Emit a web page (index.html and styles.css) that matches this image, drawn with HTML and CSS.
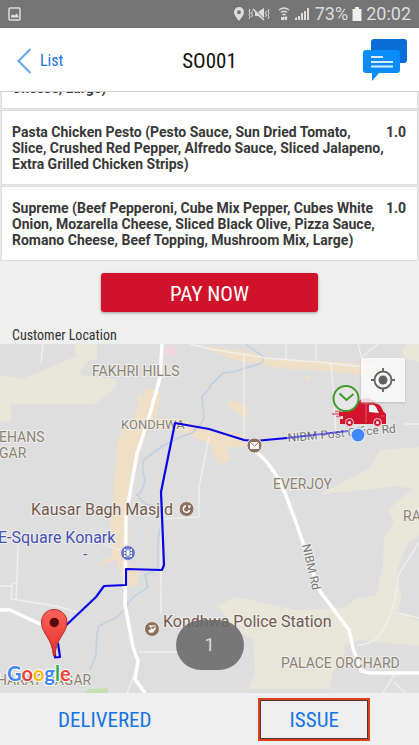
FILE: index.html
```
<!DOCTYPE html>
<html lang="en">
<head>
<meta charset="utf-8">
<meta name="viewport" content="width=device-width, initial-scale=1">
<title>SO001</title>
<link rel="stylesheet" href="styles.css">
</head>
<body>
<div class="status">
  <svg class="status-picture" width="14" height="14" viewBox="0 0 14 14" aria-hidden="true"><rect x="1" y="1" width="11" height="12" rx="1" fill="none" stroke="#ddd" stroke-width="1.5"/><path d="M3 10.500V8.500L5 7.500 6.500 8.500 8.500 6.500 10.500 9v1.500z" fill="#ddd"/></svg>
  <div class="status-right">
    <svg width="78" height="16" viewBox="0 0 78 16" fill="#ddd" aria-hidden="true">
      <path fill-rule="evenodd" d="M6 1a5 5 0 0 0-5 5c0 3.500 5 9 5 9s5-5.500 5-9a5 5 0 0 0-5-5zm0 3.200a2 2 0 1 1 0 4 2 2 0 0 1 0-4z"/>
      <path d="M22 6h3l6-4v12l-6-4h-3z"/><path d="M21 3l11 11" stroke="#757575" stroke-width="1.500"/><path d="M20 3l11 11" stroke="#ddd" stroke-width="1.300"/>
      <path d="M17 3l-1 2 1 2-1 2 1 2-1 2M19.500 5l-1 2 1 2-1 2M36 3l-1 2 1 2-1 2 1 2-1 2M33.500 5l-1 2 1 2-1 2" fill="none" stroke="#ddd"/>
      <path d="M46 4q5-4 10 0M48 6.500q3-2.500 6 0M49.500 9q1.500-1.500 3 0" fill="none" stroke="#ddd" stroke-width="1.400"/><path d="M48 11h2v-1l2 2.500-2 2.500v-1h-2zM53 10l2 2h-1v2h-2v-2h-1z"/>
      <path d="M62 14v-2l2-1v3zM65 14V10h2v4zM68 14V7h2v7zM71 14V5h2v9zM74 14V2h2v12z"/>
    </svg>
    <span>73%</span>
    <svg width="10" height="14" viewBox="0 0 10 14" aria-hidden="true"><path d="M3 0h4v2h2.500v12H.5V2H3z" fill="#eee"/></svg>
    <span class="clock">20:02</span>
  </div>
</div>
<header class="nav">
  <a class="back" href="#list"><svg width="16" height="28" viewBox="0 0 16 28" aria-hidden="true"><path d="M14.500 2L2.500 14l12 12" fill="none" stroke="#62a4f5" stroke-width="2"/></svg>List</a>
  <h1>SO001</h1>
  <button class="chat" aria-label="Messages"><svg width="46" height="44" viewBox="0 0 46 44" aria-hidden="true"><rect x="9" y="1" width="36" height="24" rx="3" fill="#0a6cd6"/><path d="M4 12h31a3 3 0 0 1 3 3v17a3 3 0 0 1-3 3H17l-7 8v-8H4a3 3 0 0 1-3-3V15a3 3 0 0 1 3-3z" fill="#0a8dfb"/><path d="M9 19h12M9 24h22M9 28.500h22" stroke="#d9efff" stroke-width="2"/></svg></button>
</header>
<section class="orders" id="list">
  <ul>
    <li><span>Cheese, Large)</span></li>
    <li><span>Pasta Chicken Pesto (Pesto Sauce, Sun Dried Tomato, Slice, Crushed Red Pepper, Alfredo Sauce, Sliced Jalapeno, Extra Grilled Chicken Strips)</span><span>1.0</span></li>
    <li><span>Supreme (Beef Pepperoni, Cube Mix Pepper, Cubes White Onion, Mozarella Cheese, Sliced Black Olive, Pizza Sauce, Romano Cheese, Beef Topping, Mushroom Mix, Large)</span><span>1.0</span></li>
  </ul>
</section>
<button class="pay">PAY NOW</button>
<h2>Customer Location</h2>
<main class="map">
  <svg class="map-art" viewBox="0 344 419 349" preserveAspectRatio="xMidYMid slice" role="img" aria-label="Delivery route">
    <rect y="344" width="419" height="349" fill="#dedede"/>
    <g fill="#e8e6d9">
      <path d="M0 375l22 4 55-23-3-12h23v14l-10 4-9 13 38 4v9l-22 16H11v17H0z"/>
      <path d="M407 344h12v18l-14-4-3-8z"/>
      <path d="M320 494l50-26 10-18 39-3v43l-22-4-71 8z"/>
      <path d="M419 484v53l-14 12-8 22 1 15 21 32v28l-60-6-14 6-2 17-10 8-3 18H249l6-18-2-32-14-6-22-28 20-8 58 13 49-2 12-9 20-4 7-30 1-28 10-14-5-13 8-8z"/>
    </g>
    <path d="M419 535l-11 8-1 8 7 4-9 20-7 38 21 8z" fill="#dedede"/>
    <g fill="#f0dfc7">
      <path d="M209 346l30 5 36 7 60 4 38 2-2 12-57-6-29-1-46-8-30-11zM142 398l5-10 14 5-5 25 25 1 15 6 47 10 3 12h-20l5 12-11 8-10-23-28-12-34-4-8 24-8 28-4 32 1 26-4 24 14 8-2 16-12 0-8-26-22 6 17-10-2-30 8-86 8-15 10-12 3-23zM225 402l11-1 10 5 4 12-13-4zM304 375l8 3-5 3z"/>
    </g>
    <path d="M165 346h11v10l-12-2z" fill="#eed7df"/><path d="M84 693l5-4 19-1v5z" fill="#c6dfb0"/>
    <path d="M211 386l-9 11 2 21q-3 8-12 15-28 9-48 27-3 8 1 20-3 14-8 15l8 9 14 3 3 12-4 21v29l-13 6 3 12-16 11-13 18-20 10q-3 8-3 30l-6 14M209 387l14-14 10-1 29-9 2-6-13-9-5-4" fill="none" stroke="#bed0e1" stroke-width="1.500"/>
    <g fill="none" stroke="#efefed" stroke-width="1.300">
      <path d="M43 344l-2 19M190 344l20 5 56 9 50 4 60 6M286 344v17M316 344v18M358 344l5 18M378 344l-17 14M331 362l5 70M244 353v84M209 437l-10 50v30l-38 2v95M0 586h11M18 544l-1 38-5 2-1 15 45 7 21 6M17 582l-1 17M100 543l20 7M404 424h15M139 652h40M357 645q17 0 26-15 12-20 16-56l20-32M398 613l21 5M394 675l-11 18M394 682l11 11M140 660l-13 33"/>
    </g>
    <g fill="none" stroke="#fff">
      <path d="M162 344l-2 34-11 39-12 37-6 33-5 30-1 88 8 42 5 14-3 18 10 14M0 610h10l30 14 22 8M253 450q18 11 32 43l13 35 21 62 30 40 4 18 8 23 10 2h48" stroke-width="3.500"/>
    </g>
    <g class="labels">
      <text class="area" x="92" y="376">FAKHRI HILLS</text><text class="area small" x="121" y="429">KONDHWA</text>
      <text class="area" x="-1" y="442">EHANS</text><text class="area" x="-1" y="458">GAR</text>
      <text class="area" x="273" y="489">EVERJOY</text><text class="area" x="403" y="521">RA</text>
      <text class="area" x="281" y="668">PALACE ORCHARD</text><text class="area" x="-3" y="685">HARAT NAGAR</text>
      <text class="place" x="31" y="515">Kausar Bagh Masjid</text><text class="place" x="163" y="627">Kondhwa Police Station</text>
      <text class="shop" x="-2" y="543">E-Square Konark</text><text class="shop" x="83" y="560">-</text>
      <text class="road" transform="translate(288 442) rotate(-5)">NIBM Post Office Rd</text>
      <text class="road" transform="translate(302 545) rotate(77)">NIBM Rd</text>
    </g>
    <g fill="none" stroke="#0803e8" stroke-width="2.200" stroke-linejoin="round">
      <path d="M287 438l-32 3-11-1-35-11-34-6-14 69 3 73-2 5-36-1v16l-22 1-8 11-37 35M58 643l2 14-5 .5v-4"/>
      <path d="M287 438l61-7" opacity=".5"/>
    </g>
    <g stroke="#f0e8e2" stroke-width="1"><circle cx="186.500" cy="509" r="7.500" fill="#8b7060"/><circle cx="254.500" cy="445.500" r="7.500" fill="#8b7060"/><circle cx="152" cy="629" r="7.500" fill="#8b7060"/><circle cx="128" cy="553" r="7.500" fill="#6875cf"/></g>
    <path d="M186 505a4 4 0 1 0 4.500 5h-2a2.300 2.300 0 1 1-2.500-3zM188 505l3 1-2 3z" fill="#fff"/>
    <path d="M250 442h9v7h-9z" fill="#fff"/><path d="M250 442l4.500 4 4.500-4" fill="none" stroke="#8b7060"/>
    <path d="M148 625h8v4l-3 4h-4l-1-3 3-1zM151 627l2 2 2-3" fill="#fff" stroke="#8b7060" stroke-width=".7"/>
    <path d="M124 549h8v8h-8z" fill="#fff"/><path d="M126 549v8M130 549v8M124 551.500h2M124 554.500h2M130 551.500h2M130 554.500h2M128 549v2M128 555v2" stroke="#6875cf"/>
    <defs><linearGradient id="pin" x2="0" y2="1"><stop stop-color="#ff6259"/><stop offset="1" stop-color="#df3029"/></linearGradient></defs>
    <path d="M54 609.500c-7 0-12.500 5.500-12.500 12.500 0 12 10.500 15 12 34h1.500c1-19 12-22 12-34 0-7-6-12.500-13-12.500z" fill="url(#pin)" stroke="#b52c28"/><circle cx="54.300" cy="622.500" r="4.700" fill="#590a0a"/>
    <path d="M332 414h9M335 411.500h6M336 416.500h5" stroke="#e06b7b" stroke-width="1.300"/>
    <path d="M339 412h3l15-7q2-7 9-7 6 0 9 5 6 1 8 8l3 3v10h-4a5 5 0 0 0-9 0h-19a5 5 0 0 0-9 0h-5v-5h3v-3h-4z" fill="#d3122d"/>
    <path d="M369 405q5-1 7 2l3 6-10-1z" fill="#fff"/><path d="M366 398v25M381 416h4" stroke="#e76a7a" stroke-width=".8"/>
    <circle cx="349.500" cy="422.500" r="4" fill="#d3122d" stroke="#f4d8dc"/><circle cx="377.500" cy="422.500" r="4" fill="#d3122d" stroke="#f4d8dc"/><g fill="#fff"><circle cx="349.500" cy="422.500" r="1.500"/><circle cx="377.500" cy="422.500" r="1.500"/></g>
    <circle cx="346" cy="398.500" r="12.500" fill="#e6e6e6" stroke="#43992b" stroke-width="2"/><path d="M339.500 393.500l7 6.500 7-6" fill="none" stroke="#43992b" stroke-width="2"/>
    <circle cx="358" cy="435" r="7" fill="#4286f5" stroke="#dceaff" stroke-width="1.300"/>
    <g class="google"><text x="7" y="681"><tspan fill="#4285f4">G</tspan><tspan fill="#ea4335">o</tspan><tspan fill="#fbbc05">o</tspan><tspan fill="#4285f4">g</tspan><tspan fill="#34a853">l</tspan><tspan fill="#ea4335">e</tspan></text></g>
  </svg>
  <button class="locate" aria-label="My location"><svg width="26" height="26" viewBox="0 0 26 26" aria-hidden="true"><circle cx="13" cy="13" r="8.500" fill="none" stroke="#606060" stroke-width="1.800"/><circle cx="13" cy="13" r="4.500" fill="#606060"/><path d="M13 1v4M13 21v4M1 13h4M21 13h4" stroke="#606060" stroke-width="1.800"/></svg></button>
  <div class="toast">1</div>
</main>
<footer class="actions"><button>DELIVERED</button><button class="issue">ISSUE</button></footer>
</body>
</html>
```
FILE: styles.css
```
* { box-sizing: border-box; }
body { margin: 0; min-height: 100vh; display: flex; flex-direction: column; background: #efefef; color: #333; font-family: "Roboto Condensed", Roboto, sans-serif; }
button { font: inherit; border: 0; padding: 0; background: none; }
svg { display: block; }
.status { height: 28px; padding: 0 8px; display: flex; align-items: center; justify-content: space-between; background: #757575; color: #ddd; font: 18px/28px Roboto, sans-serif; }
.status-right { display: flex; align-items: center; gap: 4px; }
.nav { height: 64px; padding: 0 11px; display: grid; grid-template-columns: 1fr auto 1fr; align-items: center; background: #fff; border-bottom: 1px solid #d2d2d2; }
.back { display: flex; align-items: center; gap: 8px; padding: 2px 0 0 5px; color: #1573e6; font-size: 16px; text-decoration: none; }
h1 { margin: 2px 0 0; color: #111; font-size: 21px; font-weight: 400; }
.chat { justify-self: end; }
.orders { overflow: hidden; }
ul { list-style: none; margin: -26px 0 0; padding: 0 1px; display: grid; gap: 1px; background: #e8e8e8; }
li { display: grid; grid-template-columns: 1fr auto; padding: 13px 11px 12px 10px; background: #fff; border: 1px solid #dedede; font: 700 14px/16px Roboto, sans-serif; color: #383838; }
.pay { width: 52%; height: 39px; margin: 12px auto 0; padding-top: 2px; border-radius: 3px; background: #d0122b; color: #fff; font-size: 21px; box-shadow: 0 1px 3px #999; }
h2 { margin: 14px 12px 0; font-size: 14px; line-height: 18px; font-weight: 400; }
.map { position: relative; flex: 1; display: grid; overflow: hidden; }
.map-art { width: 100%; height: 100%; }
.labels { font-family: Roboto, sans-serif; paint-order: stroke; stroke: #eeeeec; stroke-width: 2px; stroke-linejoin: round; }
.area { font-size: 14px; fill: #8d8373; }
.small { font-size: 13px; }
.place { font-size: 16px; fill: #735a4d; }
.shop { font-size: 16px; fill: #4750b5; }
.road { font-size: 12px; fill: #777; }
.google { font: 700 20px Lato, sans-serif; paint-order: stroke; stroke: #fff; stroke-width: 2px; }
.locate { position: absolute; top: 14px; right: 14px; width: 44px; height: 44px; display: grid; place-items: center; background: rgba(250, 250, 250, .85); box-shadow: 0 1px 2px #bbb; }
.toast { position: absolute; left: 50%; bottom: 23px; transform: translateX(-50%); width: 68px; height: 50px; border-radius: 25px; background: rgba(105, 105, 105, .88); color: #ddd; font: 18px/50px Roboto, sans-serif; text-align: center; }
.actions { height: 52px; display: grid; grid-template-columns: 1fr 1fr; align-items: center; justify-items: center; font-size: 21px; }
.actions button { padding-top: 2px; color: #1474e5; }
.actions .issue { width: 112px; height: 43px; border: 2px solid #dc4219; outline: 1px solid #55372f; outline-offset: -3px; }
```
